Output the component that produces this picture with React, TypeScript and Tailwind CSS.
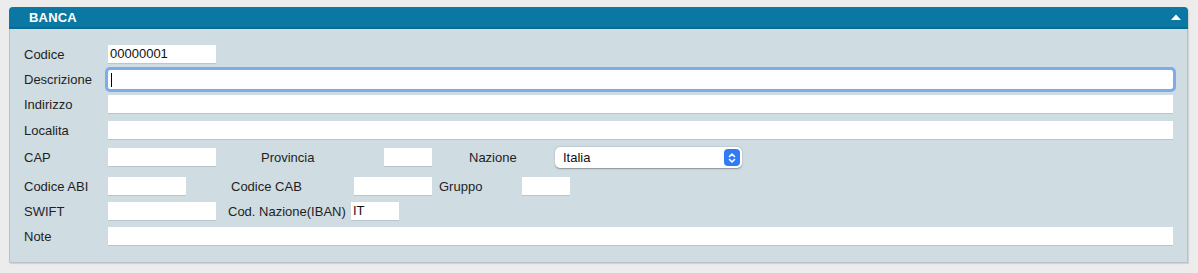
import React from 'react';

const font = { fontFamily: '"Liberation Sans", Arial, sans-serif' };

const Field = ({ w, value, grow }: { w?: string; value?: string; grow?: boolean }) => (
  <div
    className={`h-[19px] bg-white border-b border-[#b9c6cc] flex items-center pl-[2px] text-[13px] leading-[18px] text-[#111] ${grow ? 'flex-1' : w}`}
  >
    {value}
  </div>
);

const Label = ({ children, className }: { children: React.ReactNode; className: string }) => (
  <div className={`text-[13px] leading-[19px] text-[#1e1e1e] whitespace-nowrap ${className}`}>{children}</div>
);

export default function App() {
  return (
    <div className="w-[1198px] h-[273px] bg-[#ececec] pt-[7px] pl-[9px]" style={font}>
      <div className="w-[1179px] h-[256px] rounded-t-[4px] border border-[#b7c3c9] bg-[#cfdce2] shadow-[1px_1px_1px_rgba(0,0,0,0.12)] flex flex-col">
        {/* header */}
        <div className="h-[22px] -mx-px -mt-px rounded-t-[4px] bg-[#0b78a3] border-b-2 border-[#076b92] flex items-center justify-between pl-[20px] pr-[7px]">
          <span className="text-white font-bold text-[13px] leading-[19px] tracking-[0.2px]">BANCA</span>
          <svg width="10" height="6" viewBox="0 0 10 6">
            <path d="M0 6 L5 0.5 L10 6 Z" fill="#fff" />
          </svg>
        </div>

        <div className="pl-[14px] pr-[14px] pt-[16px] flex flex-col">
          <div className="flex items-center h-[19px]">
            <Label className="w-[84px]">Codice</Label>
            <Field w="w-[108px]" value="00000001" />
          </div>

          <div className="flex items-center h-[19px] mt-[6px]">
            <Label className="w-[84px]">Descrizione</Label>
            <div className="flex-1 h-[19px] bg-white rounded-[2px] outline-[3px] outline outline-[#7eabea] flex items-center pl-[3px]">
              <span className="w-px h-[14px] bg-black" />
            </div>
          </div>

          <div className="flex items-center h-[19px] mt-[6px]">
            <Label className="w-[84px]">Indirizzo</Label>
            <Field grow />
          </div>

          <div className="flex items-center h-[19px] mt-[7px]">
            <Label className="w-[84px]">Localita</Label>
            <Field grow />
          </div>

          <div className="flex items-center mt-[7px] h-[21px]">
            <Label className="w-[84px]">CAP</Label>
            <Field w="w-[108px]" />
            <Label className="ml-[45px] w-[123px]">Provincia</Label>
            <Field w="w-[48px]" />
            <Label className="ml-[37px] w-[86px]">Nazione</Label>
            <div className="w-[187px] h-[21px] bg-white rounded-[5px] shadow-[0_0.5px_1.5px_rgba(0,0,0,0.35)] flex items-center justify-between pl-[8px] pr-[2px] text-[13px] leading-[19px] text-[#111]">
              <span>Italia</span>
              <div className="w-[16px] h-[17px] rounded-[4px] bg-[#2f7cf6] flex items-center justify-center">
                <svg width="8" height="12" viewBox="0 0 8 12" fill="none" stroke="#fff" strokeWidth="1.6" strokeLinecap="round" strokeLinejoin="round">
                  <path d="M1.5 4.5 L4 2 L6.5 4.5" />
                  <path d="M1.5 7.5 L4 10 L6.5 7.5" />
                </svg>
              </div>
            </div>
          </div>

          <div className="flex items-center h-[19px] mt-[9px]">
            <Label className="w-[84px]">Codice ABI</Label>
            <Field w="w-[78px]" />
            <Label className="ml-[45px] w-[123px]">Codice CAB</Label>
            <Field w="w-[78px]" />
            <Label className="ml-[7px] w-[83px]">Gruppo</Label>
            <Field w="w-[48px]" />
          </div>

          <div className="flex items-center h-[19px] mt-[6px]">
            <Label className="w-[84px]">SWIFT</Label>
            <Field w="w-[108px]" />
            <Label className="ml-[12px] w-[123px]">Cod. Nazione(IBAN)</Label>
            <Field w="w-[48px]" value="IT" />
          </div>

          <div className="flex items-center h-[19px] mt-[6px]">
            <Label className="w-[84px]">Note</Label>
            <Field grow />
          </div>
        </div>
      </div>
    </div>
  );
}
